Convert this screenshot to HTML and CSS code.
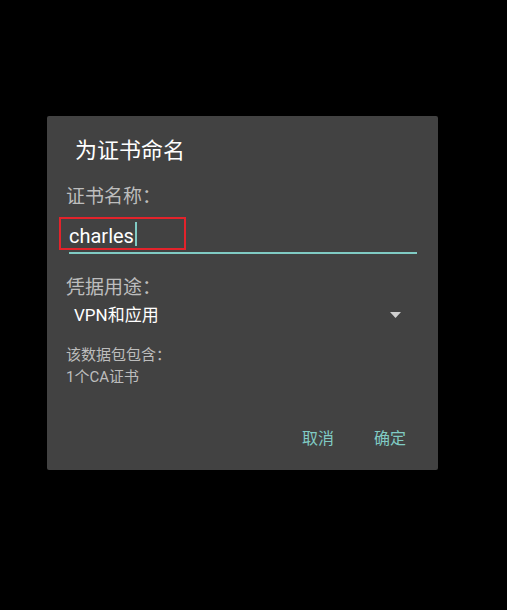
FILE: index.html
```html
<!DOCTYPE html>
<html lang="zh-CN">
<head>
<meta charset="utf-8">
<title>为证书命名</title>
<link rel="stylesheet" href="styles.css">
</head>
<body>
  <div class="dialog">
    <h1 class="title">为证书命名</h1>
    <div class="label label-name">证书名称：</div>
    <div class="field">
      <span class="field-text">charles</span><span class="cursor"></span>
      <div class="highlight"></div>
    </div>
    <div class="label label-usage">凭据用途：</div>
    <div class="spinner">
      <span class="spinner-text">VPN和应用</span>
      <svg class="spinner-arrow" width="11" height="6" viewBox="0 0 11 6"><polygon points="0,0 11,0 5.5,6" fill="#cfcfcf"/></svg>
    </div>
    <div class="info">
      <div>该数据包包含：</div>
      <div>1个CA证书</div>
    </div>
    <div class="actions">
      <span class="btn">取消</span>
      <span class="btn">确定</span>
    </div>
  </div>
</body>
</html>
```

FILE: styles.css
```css
html, body {
  margin: 0;
  padding: 0;
  background: #000;
}
body {
  padding: 116px 0 0 47px;
  height: 610px;
  box-sizing: border-box;
  font-family: Roboto, "Noto Sans CJK SC", sans-serif;
}
.dialog {
  width: 391px;
  height: 354px;
  background: #424242;
  border-radius: 2px;
  display: flex;
  flex-direction: column;
  box-sizing: border-box;
}
.title {
  margin: 20px 0 0 0;
  padding-left: 28px;
  font-size: 22px;
  font-weight: normal;
  line-height: 30px;
  color: #ffffff;
}
.label {
  padding-left: 19px;
  font-size: 19px;
  line-height: 24px;
  color: #bdbdbd;
}
.label-name {
  margin-top: 19px;
}
.field {
  position: relative;
  margin: 0 21px 0 22px;
  padding: 13px 0 4px 0;
  border-bottom: 2px solid #80cbc4;
  font-size: 20px;
  line-height: 24px;
  color: #ffffff;
}
.cursor {
  display: inline-block;
  width: 2px;
  height: 24px;
  margin-left: 1px;
  background: #80cbc4;
  vertical-align: -3px;
}
.highlight {
  position: absolute;
  left: -10px;
  top: 8px;
  width: 123px;
  height: 29px;
  border: 2px solid #e3232b;
}
.label-usage {
  margin-top: 22px;
}
.spinner {
  margin-top: 4px;
  display: flex;
  justify-content: space-between;
  align-items: center;
  padding: 0 37px 0 27px;
  height: 22px;
  font-size: 17px;
  line-height: 22px;
  color: #ffffff;
}
.spinner-arrow {
  display: block;
}
.info {
  margin-top: 18px;
  padding-left: 19px;
  font-size: 15px;
  line-height: 22px;
  color: #bdbdbd;
}
.actions {
  margin-top: auto;
  display: flex;
  justify-content: flex-end;
  gap: 40px;
  padding: 0 32px 13px 0;
}
.btn {
  font-size: 16px;
  line-height: 36px;
  color: #80cbc4;
}
```
